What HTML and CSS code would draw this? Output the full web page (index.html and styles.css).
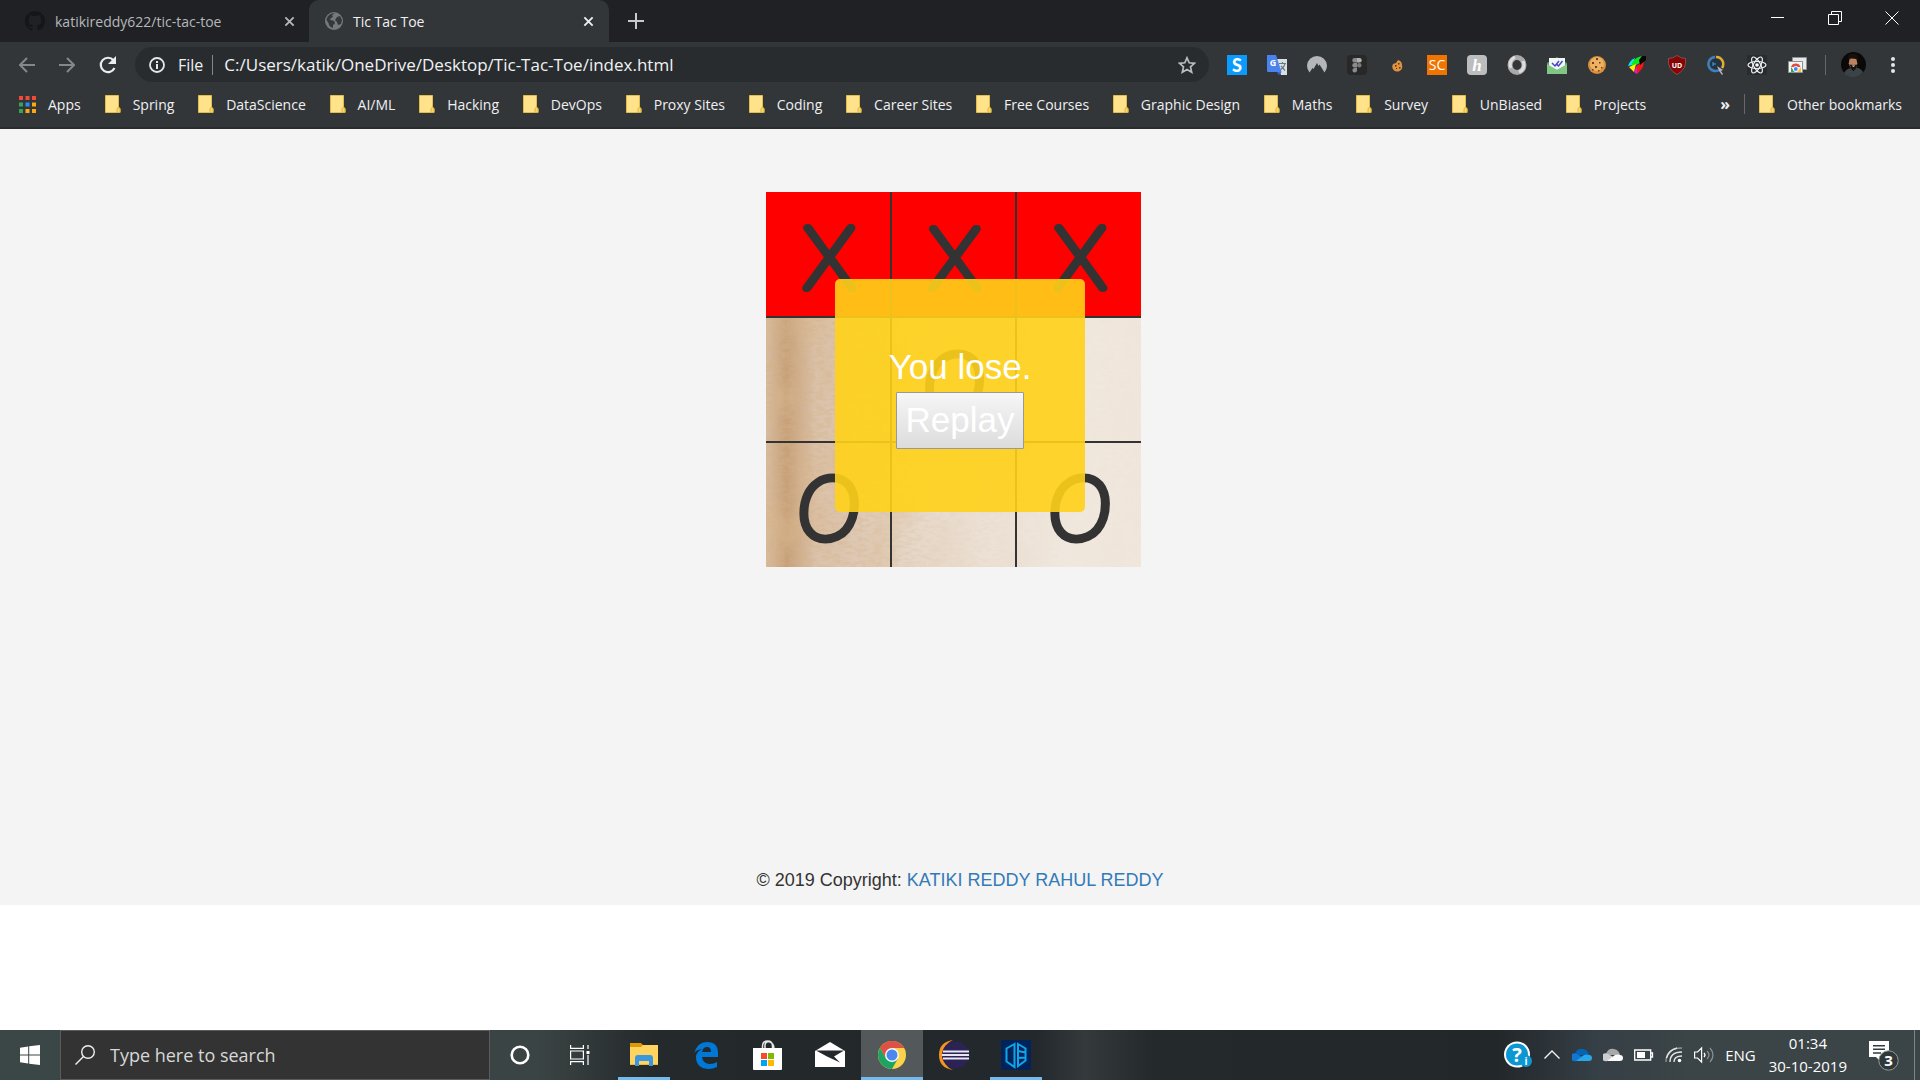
FILE: index.html
```html
<!DOCTYPE html>
<html lang="en">
<head>
<meta charset="utf-8">
<title>Tic Tac Toe</title>
<link rel="stylesheet" href="styles.css">
</head>
<body>
<svg class="defs" aria-hidden="true">
  <symbol id="folder" viewBox="0 0 16 18"><path fill="#ffe28a" stroke="#e3bd4c" d="M.5.5h13v12l1.500 1v4H.5z"/><path fill="#fbd765" stroke="#dcb540" d="M12 17.500v-4q1.500-2 3 0v4z"/></symbol>
  <symbol id="cross" viewBox="0 0 12 12"><path fill="none" stroke="currentColor" stroke-width="2" d="M1.500 1.500l9 9M10.500 1.500l-9 9"/></symbol>
  <symbol id="chrome" viewBox="0 0 28 28"><circle cx="14" cy="14" r="14" fill="#fdd24a"/><path fill="#de5246" d="M14 14L1.900 7A14 14 0 0 1 26.100 7H14z"/><path fill="#de5246" d="M14 7h12.100A14 14 0 0 0 1.900 7l6 10.500z"/><path fill="#1da462" d="M1.900 7A14 14 0 0 0 14 28l6-10.500-6 3.500-6-3.500z"/><circle cx="14" cy="14" r="7" fill="#f4f6f4"/><circle cx="14" cy="14" r="5.500" fill="#4a88f0"/></symbol>
</svg>

<header class="browser">
  <nav class="tabs" aria-label="Tabs">
    <div class="tab">
      <svg class="i20" viewBox="0 0 16 16"><path fill="#141618" d="M8 0C3.580 0 0 3.580 0 8c0 3.540 2.290 6.530 5.470 7.590.4.070.55-.17.55-.38 0-.19-.01-.82-.01-1.490-2.010.37-2.530-.49-2.690-.94-.09-.23-.48-.94-.82-1.130-.28-.15-.68-.52-.01-.53.63-.01 1.080.58 1.230.82.72 1.210 1.870.87 2.330.66.070-.52.28-.87.51-1.070-1.780-.2-3.640-.89-3.640-3.950 0-.87.31-1.590.82-2.150-.08-.2-.36-1.020.08-2.120 0 0 .67-.21 2.200.82.64-.18 1.320-.27 2-.27s1.360.09 2 .27c1.530-1.040 2.200-.82 2.200-.82.44 1.100.16 1.920.08 2.120.51.56.82 1.270.82 2.150 0 3.070-1.870 3.750-3.650 3.950.29.25.54.73.54 1.480 0 1.070-.01 1.930-.01 2.200 0 .21.15.46.55.38A8 8 0 0 0 16 8c0-4.420-3.580-8-8-8z"/></svg>
      <span class="tab-title">katikireddy622/tic-tac-toe</span>
      <button class="bare" aria-label="Close tab"><svg class="i11"><use href="#cross"/></svg></button>
    </div>
    <div class="tab active">
      <svg class="i18" viewBox="0 0 18 18"><circle cx="9" cy="9" r="9" fill="#75797c"/><path fill="#35383b" d="M10 1.500l-3 1.500 1 2-2 1-1 2 3 .5 2 1.500-.5 2-1.500 1v3Q4 15 3.500 11L1.500 8Q2 3 7 1.500zM12 5l3-1 2 4-1 4-3 1-1-3-2-2z"/></svg>
      <span class="tab-title">Tic Tac Toe</span>
      <button class="bare" aria-label="Close tab"><svg class="i11"><use href="#cross"/></svg></button>
    </div>
    <button class="bare new-tab" aria-label="New tab"><svg class="i16" viewBox="0 0 16 16"><path stroke="#c8c9cb" stroke-width="2" d="M8 0v16M0 8h16"/></svg></button>
    <div class="window-buttons">
      <button class="bare" aria-label="Minimize"><svg class="i14" viewBox="0 0 14 14"><path stroke="#fff" d="M0 6.500h13"/></svg></button>
      <button class="bare" aria-label="Restore"><svg class="i14" viewBox="0 0 14 14"><path fill="none" stroke="#fff" d="M.5 3.500h10v10H.5zM3.500 3V.5h10v10H11"/></svg></button>
      <button class="bare" aria-label="Close"><svg class="i14" viewBox="0 0 14 14"><path stroke="#fff" d="M.5.5l13 13M13.500.5l-13 13"/></svg></button>
    </div>
  </nav>

  <div class="toolbar">
    <div class="nav-buttons">
      <button class="bare" aria-label="Back"><svg class="i16" viewBox="0 0 16 16"><path fill="none" stroke="#85888a" stroke-width="2" d="M16 8H1.500M8 1L1 8l7 7"/></svg></button>
      <button class="bare" aria-label="Forward"><svg class="i16" viewBox="0 0 16 16"><path fill="none" stroke="#85888a" stroke-width="2" d="M0 8h14.500M8 1l7 7-7 7"/></svg></button>
      <button class="bare" aria-label="Reload"><svg class="i18" viewBox="0 0 18 18"><path fill="none" stroke="#eceded" stroke-width="2.200" d="M15.500 12A7.200 7.200 0 1 1 14.500 4.300"/><path fill="#eceded" d="M17 0v8H9z"/></svg></button>
    </div>
    <div class="omnibox">
      <svg class="i16" viewBox="0 0 16 16"><circle cx="8" cy="8" r="7" fill="none" stroke="#e6e7e8" stroke-width="1.800"/><path stroke="#e6e7e8" stroke-width="2" d="M8 7v5M8 4v2"/></svg>
      <label class="scheme" for="url">File</label>
      <input class="url" id="url" type="text" value="C:/Users/katik/OneDrive/Desktop/Tic-Tac-Toe/index.html">
      <button class="bare" aria-label="Bookmark this page"><svg class="i18" viewBox="0 0 18 18"><path fill="none" stroke="#b9bbbd" stroke-width="1.700" d="M9 1.800l2.200 5 5.300.5-4 3.600 1.200 5.300L9 13.400l-4.700 2.800 1.200-5.300-4-3.600 5.300-.5z"/></svg></button>
    </div>
    <div class="extensions">
      <svg class="i20" viewBox="0 0 20 20"><path fill="#0a9bff" d="M0 0h20v20H0z"/><text x="10" y="16.500" class="t-s">S</text></svg>
      <svg class="i20" viewBox="0 0 20 20"><path fill="#dcdee0" d="M8 4h12v16h-6z"/><path stroke="#607d8b" fill="none" stroke-width="1.200" d="M12 8.500h7M15.500 7v1.500M18 9q-2 5-5.500 6M14 11l4 4.500"/><path fill="#4a83ee" d="M0 0h9l5.500 17H1q-1 0-1-1z"/><path fill="#3367d6" d="M10 17h4.500L12 20z"/><text x="6" y="11" class="t-g">G</text></svg>
      <svg class="i20" viewBox="0 0 20 20"><path fill="#b4b6b9" d="M2.500 17.500A10 10 0 1 1 17.500 17.500L12.500 9.500l-1 1.500L10 8l-3.500 6-1-1z"/></svg>
      <svg class="i20" viewBox="0 0 20 20"><rect width="20" height="20" rx="4" fill="#282828"/><path fill="#8b8c8d" d="M7.500 3H10v4.500H7.500a2.200 2.200 0 0 1 0-4.500zM7.500 8H10v4.500H7.500a2.200 2.200 0 0 1 0-4.500zM7.500 13H10v2a2.300 2.300 0 1 1-2.500-2z"/><path fill="#b0b1b2" d="M10 3h2.500a2.200 2.200 0 0 1 0 4.500H10z"/><circle cx="12.300" cy="10.200" r="2.200" fill="#797a7b"/></svg>
      <svg class="i20" viewBox="0 0 20 20"><path fill="#df923f" d="M11 5q4 1 4 5a5 5 0 1 1-9-1l3-1z"/><path fill="#5a3415" d="M11 8h1.500v1.500H11zM8 10h1.500v1.500H8zM12 12h1.500v1.500H12zM9 13h1v1H9z"/></svg>
      <svg class="i20" viewBox="0 0 20 20"><path fill="#f07400" d="M0 0h20v20H0z"/><text x="10" y="15" class="t-sc">SC</text></svg>
      <svg class="i20" viewBox="0 0 20 20"><rect width="20" height="20" rx="4" fill="#bdbdbd"/><text x="10" y="16" class="t-h">h</text></svg>
      <svg class="i20" viewBox="0 0 20 20"><ellipse cx="10" cy="10" rx="7" ry="7.500" fill="none" stroke="#a9a9a9" stroke-width="5"/><path fill="none" stroke="#dedede" stroke-width="3" d="M4 13Q1 6 8 2M16 6q3 8-4 11"/></svg>
      <svg class="i20" viewBox="0 0 20 20"><path fill="#4ca860" d="M0 8l10-6 10 6v11H0z"/><path fill="#f4f5f7" d="M2 3h16v8l-8 4-8-4z"/><path fill="#81c784" d="M0 9l10 6 10-6v10H0z"/><path fill="none" stroke="#4545c8" stroke-width="1.500" d="M5 8l3 3 4-5M9.500 9l2 2 4-5"/></svg>
      <svg class="i20" viewBox="0 0 20 20"><circle cx="10" cy="10" r="9" fill="#d98f3c"/><circle cx="10" cy="9" r="7" fill="#edb261"/><path fill="#714020" d="M9 3h2v2H9zM5 7h2v2H5zM12 7h1.500v1.500H12zM8 11h2v2H8zM14 12h1.500v1.500H14zM5 14h1.500v1.500H5zM11 15h1.500v1.500H11z"/></svg>
      <svg class="i20" viewBox="0 0 20 20"><path fill="#0de8f0" d="M1 11q2-6 7-8l-2 7z"/><path fill="#10e81c" d="M5 8q4-7 12-7l-4 7-8 4z"/><path fill="#fff200" d="M2 12l7-3-2 8z"/><path fill="#e814d5" d="M7 17l3-7 2 3-2 6z"/><path fill="#fb1616" d="M10 11l6-6q3 6-6 14z"/><path fill="#080808" d="M12 5l3-4h4v4l-6 5z"/></svg>
      <svg class="i20" viewBox="0 0 20 20"><path fill="#850505" stroke="#a25b5b" stroke-width=".7" d="M10 .5q4 3 8.500 3Q20 14 10 19.500 0 14 1.500 3.500q4.500 0 8.500-3z"/><text x="10" y="12.500" class="t-ub">UD</text></svg>
      <svg class="i20" viewBox="0 0 20 20"><circle cx="9" cy="9" r="5" fill="#24343f"/><path fill="none" stroke="#3d80c4" stroke-width="2.500" d="M8 2a7 7 0 1 0 4 13"/><path fill="none" stroke="#e3ad35" stroke-width="2.500" d="M9 2a7 7 0 0 1 6 11"/><path fill="#aeb6bc" d="M10 11l6 4-2 1 2 3-1 1-3-4z"/><path stroke="#4a9be8" d="M6 7v4M6 9h3"/></svg>
      <svg class="i20" viewBox="0 0 20 20"><path fill="#282c30" d="M0 0h20v20H0z"/><g fill="none" stroke="#f1f1f1" stroke-width="1.200"><ellipse cx="10" cy="10" rx="9" ry="3.500"/><ellipse cx="10" cy="10" rx="9" ry="3.500" transform="rotate(60 10 10)"/><ellipse cx="10" cy="10" rx="9" ry="3.500" transform="rotate(120 10 10)"/></g><circle cx="10" cy="10" r="1.800" fill="#fff"/></svg>
      <svg class="i20" viewBox="0 0 20 20"><path fill="#e8e8e8" stroke="#8e9194" d="M5.500 2.500h14v12h-14z"/><path fill="#f5f5f5" stroke="#8e9194" d="M1.500 6.500h14v11h-14z"/><path fill="#e14b3c" d="M4 12a5 5 0 0 1 9.500 0z"/><path fill="#35a853" d="M4 12l4 5H4z"/><path fill="#fbc02d" d="M14 12l-4 5h4z"/><circle cx="8.800" cy="14" r="2.500" fill="#4a88f0" stroke="#fff"/></svg>
    </div>
    <div class="profile">
      <svg class="i25" viewBox="0 0 26 26"><circle cx="13" cy="13" r="13" fill="#0b0908"/><path fill="#3c4347" d="M3 22q3-5 7-5l3 3 3-4q5 1 7 5a13 13 0 0 1-20 1z"/><path fill="#bd8060" d="M9 7q4-2 7 0l1 5q-1 6-4 6t-5-6z"/><path fill="#17100d" d="M7 7q0-6 6-5 5 0 5 6-5-2-11-1zM9 13q4 1 8 0l-2 5h-4z"/><path fill="#e8d4c8" d="M11 14h4l-2 1.500z"/></svg>
      <button class="bare" aria-label="Menu"><svg class="menu-dots" viewBox="0 0 4 16"><g fill="#e5e6e7"><circle cx="2" cy="2" r="2"/><circle cx="2" cy="8" r="2"/><circle cx="2" cy="14" r="2"/></g></svg></button>
    </div>
  </div>

  <nav class="bookmarks" aria-label="Bookmarks">
    <a class="apps" href="#"><svg class="i17" viewBox="0 0 17 17"><path fill="#f4483b" d="M0 0h4v4H0zM6.500 0h4v4h-4zM13 0h4v4h-4z"/><path fill="#33a657" d="M0 6.500h4v4H0zM0 13h4v4H0z"/><path fill="#2b8af5" d="M6.500 6.500h4v4h-4z"/><path fill="#fba90d" d="M13 6.500h4v4h-4zM6.500 13h4v4h-4zM13 13h4v4h-4z"/></svg>Apps</a>
    <div class="bookmark-list">
      <a href="#"><svg><use href="#folder"/></svg>Spring</a>
      <a href="#"><svg><use href="#folder"/></svg>DataScience</a>
      <a href="#"><svg><use href="#folder"/></svg>AI/ML</a>
      <a href="#"><svg><use href="#folder"/></svg>Hacking</a>
      <a href="#"><svg><use href="#folder"/></svg>DevOps</a>
      <a href="#"><svg><use href="#folder"/></svg>Proxy Sites</a>
      <a href="#"><svg><use href="#folder"/></svg>Coding</a>
      <a href="#"><svg><use href="#folder"/></svg>Career Sites</a>
      <a href="#"><svg><use href="#folder"/></svg>Free Courses</a>
      <a href="#"><svg><use href="#folder"/></svg>Graphic Design</a>
      <a href="#"><svg><use href="#folder"/></svg>Maths</a>
      <a href="#"><svg><use href="#folder"/></svg>Survey</a>
      <a href="#"><svg><use href="#folder"/></svg>UnBiased</a>
      <a href="#"><svg><use href="#folder"/></svg>Projects</a>
    </div>
    <button class="bare more">»</button>
    <a class="other" href="#"><svg><use href="#folder"/></svg>Other bookmarks</a>
  </nav>
</header>

<main class="page">
  <section class="game">
    <div class="board">
      <svg class="paper" viewBox="0 0 375 375" preserveAspectRatio="none" aria-hidden="true">
        <defs>
          <linearGradient id="base"><stop offset="0" stop-color="#d8bda2"/><stop offset=".2" stop-color="#dcc5af"/><stop offset=".45" stop-color="#e9dccf"/><stop offset=".8" stop-color="#f0e8de"/><stop offset="1" stop-color="#f0e6dc"/></linearGradient>
          <linearGradient id="fade"><stop offset="0" stop-color="#fff"/><stop offset=".25" stop-color="#aaa"/><stop offset=".5" stop-color="#333"/><stop offset=".8" stop-color="#080808"/></linearGradient>
          <linearGradient id="streak"><stop offset="0" stop-color="#b07a40" stop-opacity="0"/><stop offset=".4" stop-color="#b07a40" stop-opacity=".45"/><stop offset="1" stop-color="#b07a40" stop-opacity="0"/></linearGradient>
          <filter id="grain" x="0" y="0" width="1" height="1"><feTurbulence type="fractalNoise" baseFrequency=".12 .3" numOctaves="4" seed="4"/><feColorMatrix values="0 0 0 0 .66 0 0 0 0 .44 0 0 0 0 .24 5 0 0 0 -2.200"/></filter>
          <filter id="wash" x="0" y="0" width="1" height="1"><feTurbulence type="fractalNoise" baseFrequency=".03 .02" numOctaves="4" seed="9"/><feColorMatrix values="0 0 0 0 .7 0 0 0 0 .48 0 0 0 0 .28 3 0 0 0 -1.200"/></filter>
          <mask id="left"><path fill="url(#fade)" d="M0 0h375v375H0z"/></mask>
        </defs>
        <path fill="url(#base)" d="M0 0h375v375H0z"/>
        <path fill="url(#streak)" d="M0 125h50v250H0z"/>
        <g mask="url(#left)"><path filter="url(#wash)" opacity=".5" d="M0 0h375v375H0z"/><path filter="url(#grain)" opacity=".4" d="M0 0h375v375H0z"/></g>
      </svg>
      <table class="grid">
        <tr class="won"><td><svg viewBox="0 0 125 125"><text class="mark" x="64" y="97">X</text></svg></td><td><svg viewBox="0 0 125 125"><text class="mark" x="64" y="97">X</text></svg></td><td><svg viewBox="0 0 125 125"><text class="mark" x="64" y="97">X</text></svg></td></tr>
        <tr><td></td><td><svg viewBox="0 0 125 125"><text class="mark o" x="63" y="97">O</text></svg></td><td></td></tr>
        <tr><td><svg viewBox="0 0 125 125"><text class="mark o" x="63" y="97">O</text></svg></td><td></td><td><svg viewBox="0 0 125 125"><text class="mark o" x="63" y="97">O</text></svg></td></tr>
      </table>
    </div>
    <div class="endgame">
      <div>You lose.</div>
      <button class="replay">Replay</button>
    </div>
  </section>
  <footer class="copyright">© 2019 Copyright: <a href="#">KATIKI REDDY RAHUL REDDY</a></footer>
</main>

<footer class="taskbar">
  <button class="bare start" aria-label="Start"><svg class="i20" viewBox="0 0 20 20"><path fill="#fff" d="M0 2.800L8.200 1.500v8H0zM9.200 1.300L20 0v9.500H9.200zM0 10.500h8.200v8L0 17.300zM9.200 10.500H20V20L9.200 18.700z"/></svg></button>
  <div class="search">
    <svg class="i20" viewBox="0 0 20 20"><circle cx="13" cy="7" r="6.300" fill="none" stroke="#f0f0f0" stroke-width="1.400"/><path stroke="#f0f0f0" stroke-width="1.400" d="M8.500 11.500L.5 19.500"/></svg>
    <input type="text" placeholder="Type here to search" aria-label="Type here to search">
  </div>
  <div class="pins system">
    <button class="bare" aria-label="Cortana"><svg class="i20" viewBox="0 0 20 20"><circle cx="10" cy="10" r="8.300" fill="none" stroke="#fff" stroke-width="2.600"/></svg></button>
    <button class="bare" aria-label="Task view"><svg class="i20" viewBox="0 0 20 20"><path fill="none" stroke="#fff" stroke-width="1.200" d="M.6 0v3.400h12.800V0M.6 20v-3.400h12.800V20M.6 6h12.800v8H.6zM18 0v4M18 10v10"/><path fill="#fff" d="M16.500 6h3v3h-3z"/></svg></button>
  </div>
  <div class="pins">
    <button class="bare open" aria-label="File Explorer"><svg class="i28" viewBox="0 0 28 28"><path fill="#dd9a00" d="M0 2h11l2 2v6H0z"/><path fill="#ffd35f" d="M0 6h11l2-2h15v20H0z"/><path fill="#eeb93e" d="M0 23h28v1H0z"/><path fill="#3a96dd" d="M5 25v-8q0-3 3-3h12q3 0 3 3v8h-4v-5H9v5z"/></svg></button>
    <button class="bare" aria-label="Edge"><svg class="i28" viewBox="0 0 28 28"><path fill="#0078d7" d="M2 13Q5 1 15 1q11 0 11 11v4H10q1 7 8 7 4 0 7-2v5q-4 2-9 2-12-1-12-12 0-5 6-8-7 1-8 5zM10 11h9q0-5-4-5t-5 5z"/></svg></button>
    <button class="bare" aria-label="Store"><svg class="i30" viewBox="0 0 30 30"><path fill="none" stroke="#e8e8e8" stroke-width="1.500" d="M9.500 9V6q0-5 5-5t5 5v3M12 9V5q0-3 4-3.500 5 1.500 5 7.500"/><path fill="#fff" d="M0 8h29v21q0 1-1 1H1q-1 0-1-1z"/><path fill="#f25022" d="M8 13h6v6H8z"/><path fill="#7fba00" d="M15 13h6v6h-6z"/><path fill="#00a4ef" d="M8 20h6v6H8z"/><path fill="#ffb900" d="M15 20h6v6h-6z"/></svg></button>
    <button class="bare" aria-label="Mail"><svg class="i30" viewBox="0 0 30 30"><path fill="#fff" d="M0 11L15 2l15 9v16H0z"/><path fill="#24282a" d="M1 10.500h28l-10 6 6 6-13-6z"/></svg></button>
    <button class="bare open current" aria-label="Chrome"><svg class="i28"><use href="#chrome"/></svg></button>
    <button class="bare" aria-label="Eclipse"><svg class="i30" viewBox="0 0 30 30"><path fill="#f7941e" d="M14 0Q0 2 0 15t14 15Q4 26 4 15T14 0z"/><circle cx="16.500" cy="15" r="13.500" fill="#2c2255"/><path stroke="#e8e6f2" stroke-width="2" d="M4 11.500h26M3 15h27M4 18.500h26"/></svg></button>
    <button class="bare open" aria-label="Code editor"><svg class="i30" viewBox="0 0 30 30"><path fill="#00245a" d="M0 0h30v30H0z"/><path fill="none" stroke="#10a5e8" stroke-width="2" d="M13.500 4L5.500 8.500v13l8 5.500zM17 4l7.500 4.500v12L17 26zM17 11l7.500 1.500M17 18l7.500-.5"/></svg></button>
  </div>
  <div class="tray">
    <svg class="i28" viewBox="0 0 28 28"><circle cx="13" cy="13.500" r="13" fill="#fff"/><circle cx="13" cy="13.500" r="11" fill="#0c97d3"/><text x="13" y="20.500" class="t-help">?</text><circle cx="22" cy="20" r="6" fill="#0c97d3"/><text x="22" y="24" class="t-info">i</text></svg>
    <svg class="i18" viewBox="0 0 18 18"><path fill="none" stroke="#f2f2f2" stroke-width="1.400" d="M1.500 12.500L9 5l7.500 7.500"/></svg>
    <svg class="i20" viewBox="0 0 20 20"><path fill="#0364b8" d="M3 9q2-6 8-5 5 1 6 6H5z"/><path fill="#0f78d4" d="M4 16a4 4 0 1 1 1-7l9 5z"/><path fill="#28a8ea" d="M4 16l8-6q3-1 5 0a3 3 0 0 1 0 6z"/></svg>
    <svg class="i20" viewBox="0 0 20 20"><path fill="#a8a8a8" d="M3 9q2-6 8-5 5 1 6 6H5z"/><path fill="#cfcfcf" d="M4 16a4 4 0 1 1 1-7l9 5z"/><path fill="#fafafa" d="M4 16l8-6q3-1 5 0a3 3 0 0 1 0 6z"/></svg>
    <svg class="i20" viewBox="0 0 20 20"><path fill="none" stroke="#fff" stroke-width="1.300" d="M.7 5h16v10H.7zM17 8h1.500v4H17"/><path fill="#fff" d="M3 7h8v6H3z"/></svg>
    <svg class="i18" viewBox="0 0 18 18"><g fill="none" stroke="#e4e4e4" stroke-width="1.400"><path d="M1 16Q1 2 17 2" opacity=".5"/><path d="M5 16Q5 6 17 6M9 16q0-6 8-6M1.500 12Q4 4 12 2"/></g><circle cx="14.500" cy="14.500" r="1.800" fill="#fff"/></svg>
    <svg class="i20" viewBox="0 0 20 20"><path fill="none" stroke="#fff" stroke-width="1.200" d="M.6 7h3l4-4v14l-4-4h-3zM10 8q2 2 0 4"/><path fill="none" stroke="#8d9293" stroke-width="1.200" d="M13 6q4 4 0 8M16 3q6 7 0 14"/></svg>
    <span class="lang">ENG</span>
    <div class="clock"><span>01:34</span><span>30-10-2019</span></div>
    <button class="bare notes" aria-label="Notifications"><svg viewBox="0 0 30 32"><path fill="#fff" d="M0 2h20v16H11v4l-4-4H0z"/><path stroke="#333c3d" stroke-width="1.500" d="M4 6.700h12M4 10.300h12M4 14h8"/><circle cx="19.500" cy="21.500" r="9.700" fill="#30383a" stroke="#90999a"/><text x="19.500" y="27" class="t-count">3</text></svg></button>
  </div>
</footer>
</body>
</html>
```
FILE: styles.css
```css
* { box-sizing: border-box; }
body {
  margin: 0;
  min-height: 100vh;
  display: flex;
  flex-direction: column;
  background: #fff;
  font-family: "Open Sans", "Noto Sans", sans-serif;
  font-size: 14px;
}
svg { display: block; flex: none; }
.defs { position: absolute; width: 0; height: 0; }
a { text-decoration: none; color: inherit; }
.bare { border: 0; padding: 0; background: none; color: inherit; font: inherit; display: flex; align-items: center; justify-content: center; }
.i11 { width: 11px; height: 11px; }
.i14 { width: 14px; height: 14px; }
.i16 { width: 16px; height: 16px; }
.i17 { width: 17px; height: 17px; }
.i18 { width: 18px; height: 18px; }
.i20 { width: 20px; height: 20px; }
.i25 { width: 25px; height: 25px; }
.i28 { width: 28px; height: 28px; }
.i30 { width: 30px; height: 30px; }

/* Browser chrome */
.browser { background: #323639; color: #eff0f1; border-bottom: 2px solid #292c2f; }
.tabs { display: flex; height: 42px; background: #202124; }
.tab { width: 309px; display: flex; align-items: center; padding: 0 14px 0 25px; gap: 10px; color: #b6b8bb; }
.tab-title { flex: 1; white-space: nowrap; }
.tab.active { width: 300px; padding: 0 15px 0 16px; background: #323639; color: #f1f1f2; border-radius: 10px 10px 0 0; }
.new-tab { width: 54px; }
.window-buttons { display: flex; margin-left: auto; padding-bottom: 6px; }
.window-buttons button { width: 57px; }
.toolbar { display: flex; align-items: center; height: 45px; padding: 0 25px 0 19px; }
.nav-buttons { display: flex; gap: 24px; width: 116px; }
.omnibox { flex: 1; display: flex; align-items: center; height: 35px; padding: 0 13px 0 14px; border-radius: 18px; background: #282c2f; font-size: 16px; }
.scheme { margin-left: 13px; padding-right: 9px; border-right: 1px solid #85888a; line-height: 20px; }
.url { flex: 1; border: 0; padding: 0; margin-left: 11px; background: none; color: #f1f2f3; font: inherit; font-size: 17px; outline: 0; }
.extensions { display: flex; gap: 20px; padding: 0 18px; }
.profile { display: flex; align-items: center; gap: 25px; height: 20px; padding-left: 15px; border-left: 1px solid #66696c; }
.menu-dots { width: 4px; height: 16px; }
.bookmarks { display: flex; align-items: center; height: 40px; padding: 0 18px 6px 19px; white-space: nowrap; }
.bookmarks a { display: flex; align-items: center; gap: 12px; }
.bookmarks a > svg:not(.i17) { width: 16px; height: 18px; }
.bookmarks .bookmark-list { flex: 1; display: flex; justify-content: space-between; margin: 0 74px 0 24px; }
.more { font-size: 16px; font-weight: 700; }
.bookmarks .other { margin-left: 14px; padding-left: 14px; border-left: 1px solid #66696c; height: 20px; }

.t-s, .t-g, .t-sc, .t-h, .t-ub, .t-help, .t-info, .t-count { fill: #fff; text-anchor: middle; font-family: "Open Sans", sans-serif; font-weight: 700; }
.t-s { font-family: Lato, sans-serif; font-size: 18px; font-weight: 900; }
.t-g { font-size: 9px; }
.t-sc { font-size: 14px; font-weight: 400; }
.t-h { font-family: "Liberation Serif", serif; font-size: 17px; font-style: italic; }
.t-ub { font-size: 7px; }
.t-help { font-size: 20px; }
.t-info { font-size: 10px; }
.t-count { font-size: 15px; }

/* Game */
.page { flex: 1; }
.game { position: relative; padding: 63px 13px 301px 0; background: #f4f4f4; }
.board { position: relative; width: 375px; margin: 0 auto; }
.paper { position: absolute; inset: 0; width: 100%; height: 100%; }
.grid { position: relative; border-collapse: collapse; table-layout: fixed; width: 375px; height: 375px; }
.grid td { width: 125px; height: 125px; padding: 0; border: 2px solid #333; }
.grid tr:first-child td { border-top: 0; }
.grid tr:last-child td { border-bottom: 0; }
.grid td:first-child { border-left: 0; }
.grid td:last-child { border-right: 0; }
.grid svg { width: 100%; height: 100%; }
.won { background: #f00; }
.mark { fill: #333; stroke: #333; stroke-width: 8px; stroke-linejoin: round; text-anchor: middle; font-family: Lato, sans-serif; font-weight: 100; font-size: 86px; }
.mark.o { font-style: italic; }
.endgame {
  position: absolute;
  top: 150px;
  left: calc(50% - 125px);
  width: 250px;
  padding: 63px 0;
  border-radius: 5px;
  background: rgba(255, 209, 24, .9);
  color: #fff;
  text-align: center;
  font-family: "Liberation Sans", Arial, sans-serif;
  font-size: 35px;
  line-height: 50px;
}
.replay { display: block; margin: 0 auto; width: 128px; height: 57px; padding: 0 0 2px; border: 1px solid #999; border-radius: 1px; background: linear-gradient(#f6f6f6, #dcdcdc); color: #fff; font: inherit; }
.copyright { padding: 0 0 12px; background: #f4f4f4; color: #333; text-align: center; font-family: "Liberation Sans", Arial, sans-serif; font-size: 18px; line-height: 25px; }
.copyright a { color: #337ab7; }

/* Taskbar */
.taskbar {
  display: flex;
  height: 50px;
  color: #fff;
  background: linear-gradient(90deg, #3b4646 0, #3b4444 28%, #24292b 34%, #22282b 54%, #343a3c 56.500%, #24292b 60%, #22272a 78%, #353f46 83%, #3b4446 88%, #3b4446 100%);
}
.start { width: 60px; }
.search { display: flex; align-items: center; gap: 15px; width: 430px; padding: 0 14px; border: 1px solid #5b5b5b; background: #333; }
.search input { flex: 1; border: 0; padding: 0; background: none; outline: 0; color: #fff; font: inherit; font-size: 18px; }
.search input::placeholder { color: #d8d8d8; opacity: 1; }
.pins { display: flex; }
.pins button { position: relative; width: 62px; }
.system { margin-right: 3px; }
.system button { width: 60px; }
.open::after { content: ""; position: absolute; bottom: 0; left: 5px; right: 5px; height: 3px; background: #76b9ed; }
.current { background: #53585a; }
.current::after { left: 0; right: 0; }
.tray { display: flex; align-items: center; gap: 11px; margin-left: auto; margin-right: 5px; padding-right: 15px; border-right: 1px solid #7d8586; }
.lang { font-size: 15px; }
.clock { display: flex; flex-direction: column; align-items: center; font-size: 15px; line-height: 23px; margin: 0 11px 0 2px; }
.notes svg { width: 30px; height: 32px; }
```
